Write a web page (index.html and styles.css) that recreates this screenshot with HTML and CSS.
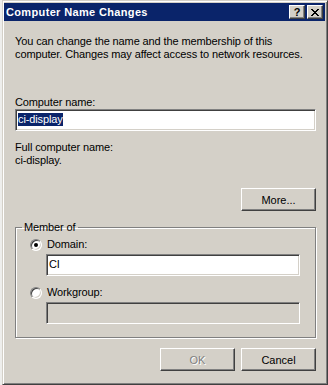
FILE: index.html
```html
<!DOCTYPE html>
<html lang="en">
<head>
    <meta charset="UTF-8">
    <title>Computer Name Changes</title>
    <link rel="stylesheet" href="styles.css">
</head>
<body>
    <div class="window">
        <!-- Caption -->
        <div class="titlebar">
            <span class="title">Computer Name Changes</span>
            <div class="caption-buttons">
                <span class="cap-btn help">?</span>
                <span class="cap-btn close">
                    <svg width="8" height="7" viewBox="0 0 8 7">
                        <path d="M0 0h2v1h1v1h2v-1h1v-1h2v1h-1v1h-1v1h-1v1h1v1h1v1h1v1h-2v-1h-1v-1h-2v1h-1v1h-2v-1h1v-1h1v-1h1v-1h-1v-1h-1v-1h-1z" fill="#000"/>
                    </svg>
                </span>
            </div>
        </div>

        <!-- Dialog body -->
        <div class="content">
            <p class="intro">You can change the name and the membership of this<br>computer. Changes may affect access to network resources.</p>

            <div class="label name-label">Computer name:</div>
            <div class="field"><span class="selected">ci-display</span></div>

            <div class="label full-label">Full computer name:</div>
            <div class="label">ci-display.</div>

            <div class="more-row">
                <button class="btn">More...</button>
            </div>

            <fieldset class="group">
                <legend>Member of</legend>
                <div class="radio-row">
                    <span class="radio checked"></span>
                    <span>Domain:</span>
                </div>
                <div class="field indented">CI</div>

                <div class="radio-row workgroup">
                    <span class="radio"></span>
                    <span>Workgroup:</span>
                </div>
                <div class="field indented disabled"></div>
            </fieldset>

            <div class="actions">
                <button class="btn" disabled>OK</button>
                <button class="btn">Cancel</button>
            </div>
        </div>
    </div>
</body>
</html>
```

FILE: styles.css
```css
* {
    margin: 0;
    padding: 0;
    box-sizing: border-box;
}

body {
    width: 328px;
    height: 385px;
    overflow: hidden;
    background: #eeeeec;
    font-family: 'Liberation Sans', Arial, sans-serif;
    font-size: 11px;
    line-height: 13px;
    letter-spacing: -0.12px;
    color: #000;
}

/* Classic 3D window frame */
.window {
    margin-left: 2px;
    width: 326px;
    height: 385px;
    background: #d4d0c8;
    border: 1px solid;
    border-color: #d4d0c8 #404040 #404040 #d4d0c8;
    box-shadow: inset 1px 1px #fff, inset -1px -1px #808080;
    padding: 2px 2px 2px 1px;
}

.titlebar {
    height: 18px;
    background: #0a246a;
    display: flex;
    align-items: center;
    justify-content: space-between;
    padding: 0 2px 0 2px;
}

.title {
    color: #fff;
    font-weight: bold;
    font-size: 11px;
    line-height: 18px;
    letter-spacing: 0.35px;
}

.caption-buttons {
    display: flex;
    gap: 2px;
}

.cap-btn {
    width: 16px;
    height: 14px;
    background: #d4d0c8;
    border: 1px solid;
    border-color: #fff #404040 #404040 #fff;
    box-shadow: inset -1px -1px #808080;
    display: flex;
    align-items: center;
    justify-content: center;
}

.cap-btn.help {
    font-weight: bold;
    font-size: 11px;
    line-height: 12px;
}

/* Dialog content */
.content {
    padding: 14px 9px 0 11px;
}

.name-label {
    margin-top: 35px;
}

.full-label {
    margin-top: 10px;
}

.field {
    height: 22px;
    background: #fff;
    border: 1px solid;
    border-color: #808080 #fff #fff #808080;
    box-shadow: inset 1px 1px #404040, inset -1px -1px #d4d0c8;
    padding: 3px 2px;
    line-height: 13px;
}

.field .selected {
    display: inline-block;
    background: #0a246a;
    color: #fff;
    line-height: 13px;
}

.field.disabled {
    background: #d4d0c8;
}

.more-row {
    margin-top: 21px;
    display: flex;
    justify-content: flex-end;
}

.btn {
    width: 75px;
    height: 23px;
    font-family: inherit;
    font-size: 11px;
    color: #000;
    background: #d4d0c8;
    border: 1px solid;
    border-color: #fff #404040 #404040 #fff;
    box-shadow: inset -1px -1px #808080;
    border-radius: 0;
}

.btn:disabled {
    color: #808080;
    text-shadow: 1px 1px #fff;
}

/* Member of group */
.group {
    margin-top: 10px;
    border: 1px solid #808080;
    box-shadow: inset 1px 1px #fff, 1px 1px #fff;
    padding: 4px 15px 13px 14px;
}

.group legend {
    margin-left: -8px;
    padding: 0 2px;
    line-height: 13px;
}

.radio-row {
    display: flex;
    align-items: center;
    gap: 5px;
    height: 13px;
}

.radio-row.workgroup {
    margin-top: 10px;
}

.radio {
    width: 12px;
    height: 12px;
    border-radius: 50%;
    background: #fff;
    border: 1px solid;
    border-color: #808080 #fff #fff #808080;
    box-shadow: inset 1px 1px #404040, inset -1px -1px #d4d0c8;
    display: flex;
    align-items: center;
    justify-content: center;
}

.radio.checked::after {
    content: "";
    width: 4px;
    height: 4px;
    border-radius: 50%;
    background: #000;
}

.field.indented {
    margin: 3px 0 0 16px;
}

.actions {
    margin-top: 10px;
    display: flex;
    justify-content: flex-end;
    gap: 6px;
}
```
